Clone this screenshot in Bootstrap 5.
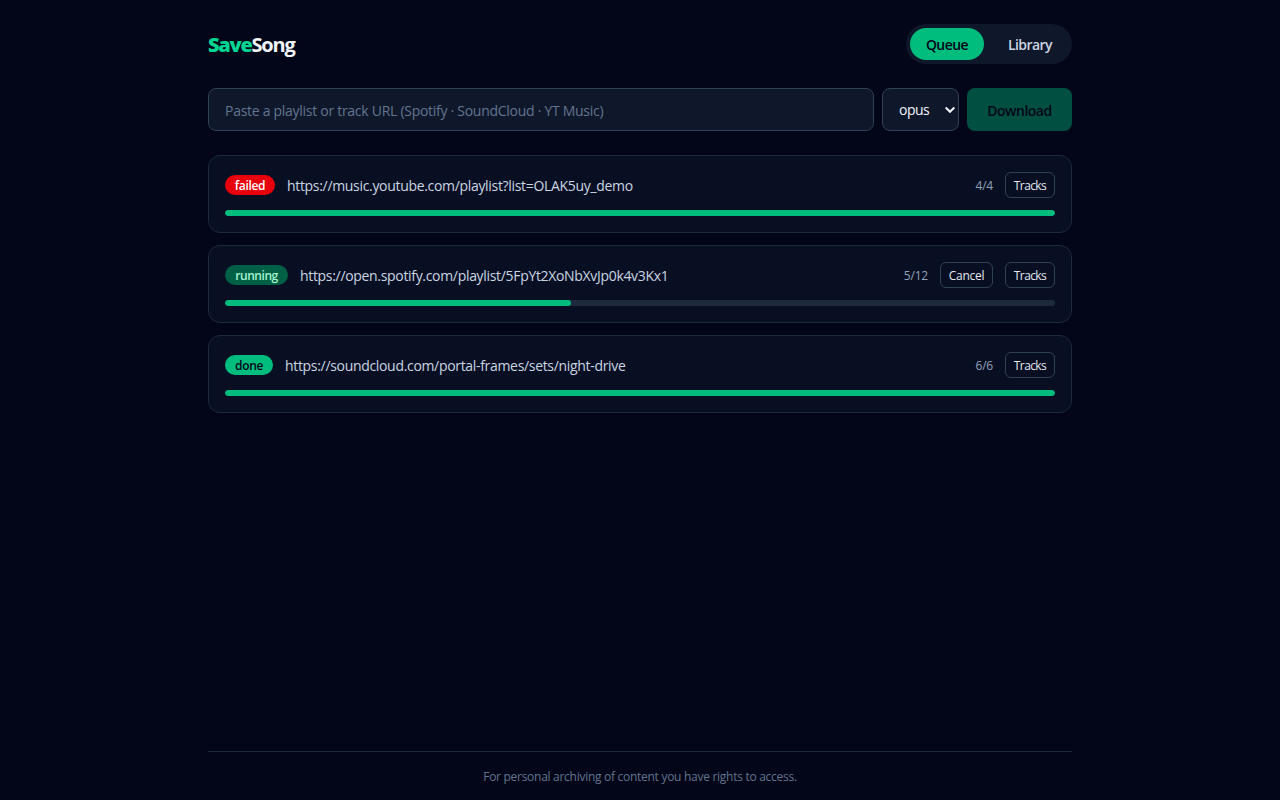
<!DOCTYPE html>
<html lang="en">
<head>
<meta charset="utf-8">
<meta name="viewport" content="width=device-width, initial-scale=1">
<title>SaveSong</title>
<link href="https://cdn.jsdelivr.net/npm/bootstrap@5.3.0/dist/css/bootstrap.min.css" rel="stylesheet">
<style>
body{background:#020618;color:#f1f5f9;font-family:"Segoe UI","Open Sans","Noto Sans",sans-serif;font-size:14px;line-height:20px}
.shell{width:864px;height:800px}
.brand{font-size:20px;font-weight:700;line-height:28px;letter-spacing:-1.25px;padding-top:2px}
.brand b{color:#00d492}
.tabs{background:#0f172b;padding:4px;gap:8px;height:40px}
.tabs .btn{font-size:14px;line-height:20px;font-weight:600;height:32px;padding:1px 0 0;border:0;color:#cad5e2;width:76px;letter-spacing:-.55px}
.tabs .btn.active{background:#00bc7d;color:#020618;width:74px}
.field{height:43px;border:1px solid #314158!important;border-radius:8px;background-color:#0f172b!important;color:#f1f5f9!important;font-size:14px;line-height:20px;padding:0 16px}
.url-in{letter-spacing:-.28px;padding-top:1px}
.field::placeholder{color:#62748e;opacity:1}
.fmt{width:77px}
.fmt select{appearance:none;background:none;border:0;color:inherit;width:100%;height:100%;padding:1px 0 0;outline:0;letter-spacing:-.5px}
.fmt svg{position:absolute;right:2px;top:16px;pointer-events:none}
.btn.dl{width:105px;height:43px;border-radius:8px;border:0;padding:1px 0 0;background:#00bc7d;color:#020618;font-size:14px;font-weight:600;letter-spacing:-.5px;opacity:.4}
.job{border:1px solid #1d293d;border-radius:12px;background:#090f22;padding:16px;height:78px;gap:12px}
.job .top{height:26px;gap:12px}
.pill{height:20px;line-height:21px;font-size:12px;font-weight:600;border-radius:10px;text-align:center;letter-spacing:-.35px}
.failed{background:#e7000b;color:#fff;width:50px}
.running{background:#006045;color:#a4f4cf;width:63px;letter-spacing:-.45px}
.done{background:#00bc7d;color:#020618;width:48px}
.link{color:#cad5e2;letter-spacing:-.32px;padding-top:1px}
.count{font-size:12px;color:#90a1b9;letter-spacing:-.2px;padding-top:1px}
.btn.act{font-size:12px;line-height:16px;height:26px;width:50px;padding:1px 0 0;border:1px solid #314158;border-radius:6px;color:#e2e8f0;letter-spacing:-.6px}
.btn.act.cancel{width:53px;letter-spacing:-.3px}
.progress.bar{height:6px;border-radius:3px;background:#1d293d}
.bar .progress-bar{background:#00bc7d;border-radius:3px}
.foot{border-top:1px solid #1d293d;height:49px;padding-top:17px;font-size:12px;line-height:16px;color:#62748e;letter-spacing:-.28px}
</style>
</head>
<body>
<div class="shell mx-auto d-flex flex-column pt-4">
  <header class="d-flex justify-content-between align-items-center mb-4">
    <div class="brand"><b>Save</b><span>Song</span></div>
    <nav class="tabs d-flex rounded-pill">
      <button class="btn rounded-pill active">Queue</button>
      <button class="btn rounded-pill">Library</button>
    </nav>
  </header>
  <form class="d-flex gap-2 mb-4">
    <input class="form-control field url-in flex-fill" placeholder="Paste a playlist or track URL (Spotify · SoundCloud · YT Music)">
    <div class="field fmt position-relative flex-shrink-0">
      <select aria-label="Format"><option>opus</option></select>
      <svg width="12" height="10" viewBox="0 0 12 10" fill="none" stroke="#f1f5f9" stroke-width="2"><path d="M1.7 2.5 6 6.8l4.3-4.3"/></svg>
    </div>
    <button type="button" class="btn dl flex-shrink-0">Download</button>
  </form>
  <main class="d-flex flex-column flex-fill" style="gap:12px">
    <article class="job d-flex flex-column">
      <div class="top d-flex align-items-center">
        <span class="pill failed">failed</span><span class="link flex-fill">https://music.youtube.com/playlist?list=OLAK5uy_demo</span>
        <span class="count">4/4</span><button class="btn act">Tracks</button>
      </div>
      <div class="progress bar"><div class="progress-bar" style="width:100%"></div></div>
    </article>
    <article class="job d-flex flex-column">
      <div class="top d-flex align-items-center">
        <span class="pill running">running</span><span class="link flex-fill">https://open.spotify.com/playlist/5FpYt2XoNbXvJp0k4v3Kx1</span>
        <span class="count">5/12</span><button class="btn act cancel">Cancel</button><button class="btn act">Tracks</button>
      </div>
      <div class="progress bar"><div class="progress-bar" style="width:41.67%"></div></div>
    </article>
    <article class="job d-flex flex-column">
      <div class="top d-flex align-items-center">
        <span class="pill done">done</span><span class="link flex-fill">https://soundcloud.com/portal-frames/sets/night-drive</span>
        <span class="count">6/6</span><button class="btn act">Tracks</button>
      </div>
      <div class="progress bar"><div class="progress-bar" style="width:100%"></div></div>
    </article>
  </main>
  <footer class="foot text-center">For personal archiving of content you have rights to access.</footer>
</div>
<script src="https://cdn.jsdelivr.net/npm/bootstrap@5.3.0/dist/js/bootstrap.bundle.min.js"></script>
</body>
</html>
